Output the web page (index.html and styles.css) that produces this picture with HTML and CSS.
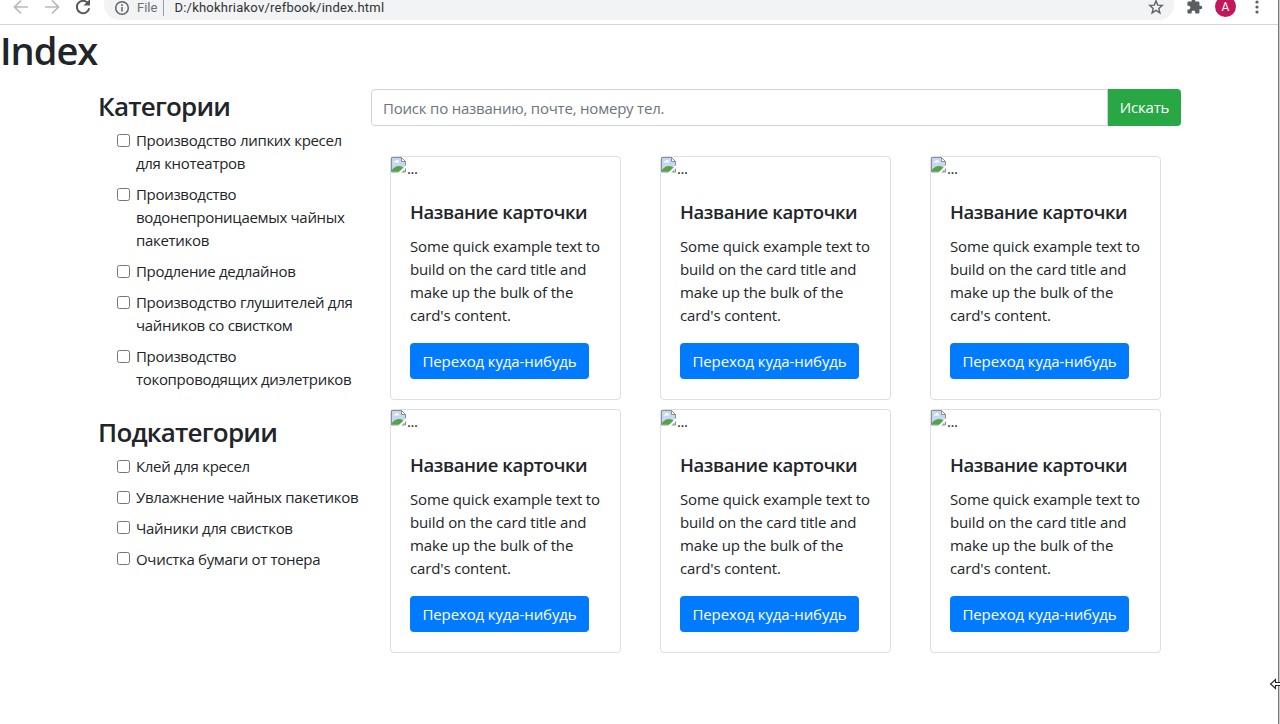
FILE: index.html
```html
<!DOCTYPE html>
<html lang="ru">
<head>
<meta charset="utf-8">
<title>Index</title>
<link rel="stylesheet" href="styles.css">
</head>
<body>
<svg class="defs" width="0" height="0">
  <symbol id="broken" viewBox="0 0 16 16">
    <path d="M.5.5h10l4 4v10.500H.5z" fill="#c5d7f3" stroke="#8c8f92"/>
    <path d="M10.500.5v4h4z" fill="#fff" stroke="#8c8f92"/>
    <path d="M3 5.500q0-1.500 1.500-1.500Q5 2.500 6.500 3 8 3 8 5.500z" fill="#fff"/>
    <path d="M1 14.500V13q3-4 7-4 3 0 5 2v3.500z" fill="#55a344"/>
    <path d="M7 16L16 7v3l-6 6z" fill="#fff"/>
  </symbol>
</svg>
<header class="toolbar">
  <svg class="nav" width="104" height="24" viewBox="0 0 104 24" fill="none" stroke-width="1.700">
    <path d="M28 14H15M21 7.500L14.500 14l6.500 6.500M45 14h13M52 7.500l6.500 6.500-6.500 6.500" stroke="#b7b9bc"/>
    <path d="M88 10.200a6.200 6.200 0 1 0 1.200 5" stroke="#55585c" stroke-width="2"/>
    <path d="M90 6v6.500h-6.500z" fill="#55585c"/>
  </svg>
  <div class="address">
    <svg width="16" height="16" viewBox="0 0 16 16" fill="none" stroke="#5f6368" stroke-width="1.500"><circle cx="8" cy="8" r="6.300"/><path d="M8 7v4.500M8 4.300v1.600"/></svg>
    <span class="scheme">File</span>
    <span class="url">D:/khokhriakov/refbook/index.html</span>
    <svg class="star" width="16" height="16" viewBox="0 0 16 16" fill="none" stroke="#5f6368" stroke-width="1.400"><path d="M8 1.800l1.700 4.300 4.600.3-3.500 3 1.100 4.500L8 11.400l-3.900 2.500 1.100-4.500-3.500-3 4.600-.3z"/></svg>
  </div>
  <svg class="puzzle" width="17" height="17" viewBox="0 0 24 24" fill="#5a5d61"><path d="M20.500 11H19V7c0-1.100-.9-2-2-2h-4V3.500a2.500 2.500 0 0 0-5 0V5H4c-1.100 0-2 .9-2 2v3.800h1.500a2.700 2.700 0 0 1 0 5.400H2V20c0 1.100.9 2 2 2h3.800v-1.500a2.700 2.700 0 0 1 5.400 0V22H17c1.100 0 2-.9 2-2v-4h1.500a2.500 2.500 0 0 0 0-5z"/></svg>
  <span class="avatar">A</span>
  <svg class="dots" width="4" height="16" viewBox="0 0 4 16" fill="#5a5d61"><circle cx="2" cy="3" r="1.600"/><circle cx="2" cy="8" r="1.600"/><circle cx="2" cy="13" r="1.600"/></svg>
</header>
<h1>Index</h1>
<div class="layout">
  <aside>
    <h2 class="cat">Категории</h2>
    <ul>
      <li><i class="box"></i><label>Производство липких кресел<br>для кнотеатров</label></li>
      <li><i class="box"></i><label>Производство<br>водонепроницаемых чайных<br>пакетиков</label></li>
      <li><i class="box"></i><label>Продление дедлайнов</label></li>
      <li><i class="box"></i><label>Производство глушителей для<br>чайников со свистком</label></li>
      <li><i class="box"></i><label>Производство<br>токопроводящих диэлетриков</label></li>
    </ul>
    <h2 class="sub">Подкатегории</h2>
    <ul>
      <li><i class="box"></i><label>Клей для кресел</label></li>
      <li><i class="box"></i><label>Увлажнение чайных пакетиков</label></li>
      <li><i class="box"></i><label>Чайники для свистков</label></li>
      <li><i class="box"></i><label>Очистка бумаги от тонера</label></li>
    </ul>
  </aside>
  <main>
    <div class="search"><div class="field">Поиск по названию, почте, номеру тел.</div><div class="find">Искать</div></div>
    <div class="cards">
      <article><div class="pic"><svg width="16" height="16"><use href="#broken"/></svg>...</div><h3>Название карточки</h3><p>Some quick example text to<br>build on the card title and<br>make up the bulk of the<br>card's content.</p><a class="btn">Переход куда-нибудь</a></article>
      <article><div class="pic"><svg width="16" height="16"><use href="#broken"/></svg>...</div><h3>Название карточки</h3><p>Some quick example text to<br>build on the card title and<br>make up the bulk of the<br>card's content.</p><a class="btn">Переход куда-нибудь</a></article>
      <article><div class="pic"><svg width="16" height="16"><use href="#broken"/></svg>...</div><h3>Название карточки</h3><p>Some quick example text to<br>build on the card title and<br>make up the bulk of the<br>card's content.</p><a class="btn">Переход куда-нибудь</a></article>
      <article><div class="pic"><svg width="16" height="16"><use href="#broken"/></svg>...</div><h3>Название карточки</h3><p>Some quick example text to<br>build on the card title and<br>make up the bulk of the<br>card's content.</p><a class="btn">Переход куда-нибудь</a></article>
      <article><div class="pic"><svg width="16" height="16"><use href="#broken"/></svg>...</div><h3>Название карточки</h3><p>Some quick example text to<br>build on the card title and<br>make up the bulk of the<br>card's content.</p><a class="btn">Переход куда-нибудь</a></article>
      <article><div class="pic"><svg width="16" height="16"><use href="#broken"/></svg>...</div><h3>Название карточки</h3><p>Some quick example text to<br>build on the card title and<br>make up the bulk of the<br>card's content.</p><a class="btn">Переход куда-нибудь</a></article>
    </div>
  </main>
</div>
<div class="edge"></div>
<svg class="cursor" width="11" height="12" viewBox="0 0 11 12"><path d="M11 4.500H6.500V1.500L1.500 6l5 4.500v-3H11" fill="#fff" stroke="#222" stroke-width="1.100"/></svg>
</body>
</html>
```
FILE: styles.css
```css
* { box-sizing: border-box; }
body {
  margin: 0;
  height: 724px;
  overflow: hidden;
  position: relative;
  background: #fff;
  color: #212529;
  font: 15px/23.16px "Open Sans", "Noto Sans", sans-serif;
  white-space: nowrap;
}
.defs { position: absolute; }
h1, h2, h3, p, ul { margin: 0; padding: 0; }

.toolbar {
  height: 25px;
  border-bottom: 1px solid #d5d6d8;
  display: flex;
  align-items: flex-start;
  font: 13px/16px Roboto, sans-serif;
  color: #303235;
}
.nav { flex: none; margin-top: -7px; }
.address {
  width: 1070px;
  height: 31px;
  margin-top: -11px;
  padding: 6px 10px 0 10px;
  border-radius: 16px;
  background: #f1f3f4;
  display: flex;
  align-items: center;
}
.scheme {
  margin-left: 7px;
  padding-right: 6px;
  border-right: 1px solid #9a9da1;
  color: #6b6f73;
}
.url { margin-left: 10px; letter-spacing: .23px; }
.star { margin-left: auto; margin-top: -2px; }
.puzzle { margin: -2px 0 0 12px; }
.avatar {
  width: 21px;
  height: 21px;
  margin: -4px 0 0 12px;
  border-radius: 50%;
  background: #c2185b;
  color: #fff;
  font-size: 12px;
  line-height: 23px;
  text-align: center;
}
.dots { margin: -1px 0 0 19px; }

h1 {
  height: 64px;
  padding-top: 2px;
  font-size: 38px;
  line-height: 46px;
  font-weight: 600;
  letter-spacing: -1px;
}
.layout { display: flex; padding-left: 98px; }
aside { width: 273px; }
h2 { font-size: 26px; line-height: 32px; font-weight: 600; letter-spacing: -.78px; }
.cat { padding: 1px 0 7px; }
.sub { padding: 17px 0 7px; }
ul { list-style: none; padding-left: 19px; }
li { display: flex; gap: 6px; margin-bottom: 7.720px; letter-spacing: -.31px; }
.box {
  flex: none;
  width: 13px;
  height: 13px;
  margin-top: 4.500px;
  border: 1px solid #767676;
  border-radius: 2.500px;
  background: #fff;
}
main { width: 810px; }
.search { display: flex; height: 37px; }
.field {
  flex: 1;
  padding: 7px 11px;
  border: 1px solid #ced4da;
  border-radius: 4px 0 0 4px;
  color: #6c757d;
  letter-spacing: -.21px;
}
.find {
  width: 73px;
  padding-top: 7px;
  border-radius: 0 4px 4px 0;
  background: #28a745;
  color: #fff;
  text-align: center;
  letter-spacing: -.2px;
}
.cards {
  display: grid;
  grid-template-columns: repeat(3, 231px);
  grid-auto-rows: 244px;
  gap: 9px 39px;
  padding: 30px 19px 0;
}
article {
  border: 1px solid #dfdfdf;
  border-radius: 4px;
  padding-left: 19px;
}
.pic { display: flex; height: 42px; margin-left: -19px; line-height: 22px; letter-spacing: -.4px; }
h3 { height: 36px; font-size: 18.500px; line-height: 26px; font-weight: 600; letter-spacing: -.42px; }
p { height: 108px; letter-spacing: -.14px; }
.btn {
  display: block;
  width: 179px;
  height: 36px;
  border-radius: 4px;
  background: #007bff;
  color: #fff;
  line-height: 37px;
  text-align: center;
  letter-spacing: -.12px;
}
.edge { position: absolute; right: 0; top: 0; width: 2px; height: 724px; background: linear-gradient(90deg, #777 50%, #ccc 50%); }
.cursor { position: absolute; right: 0; top: 678px; }
```
